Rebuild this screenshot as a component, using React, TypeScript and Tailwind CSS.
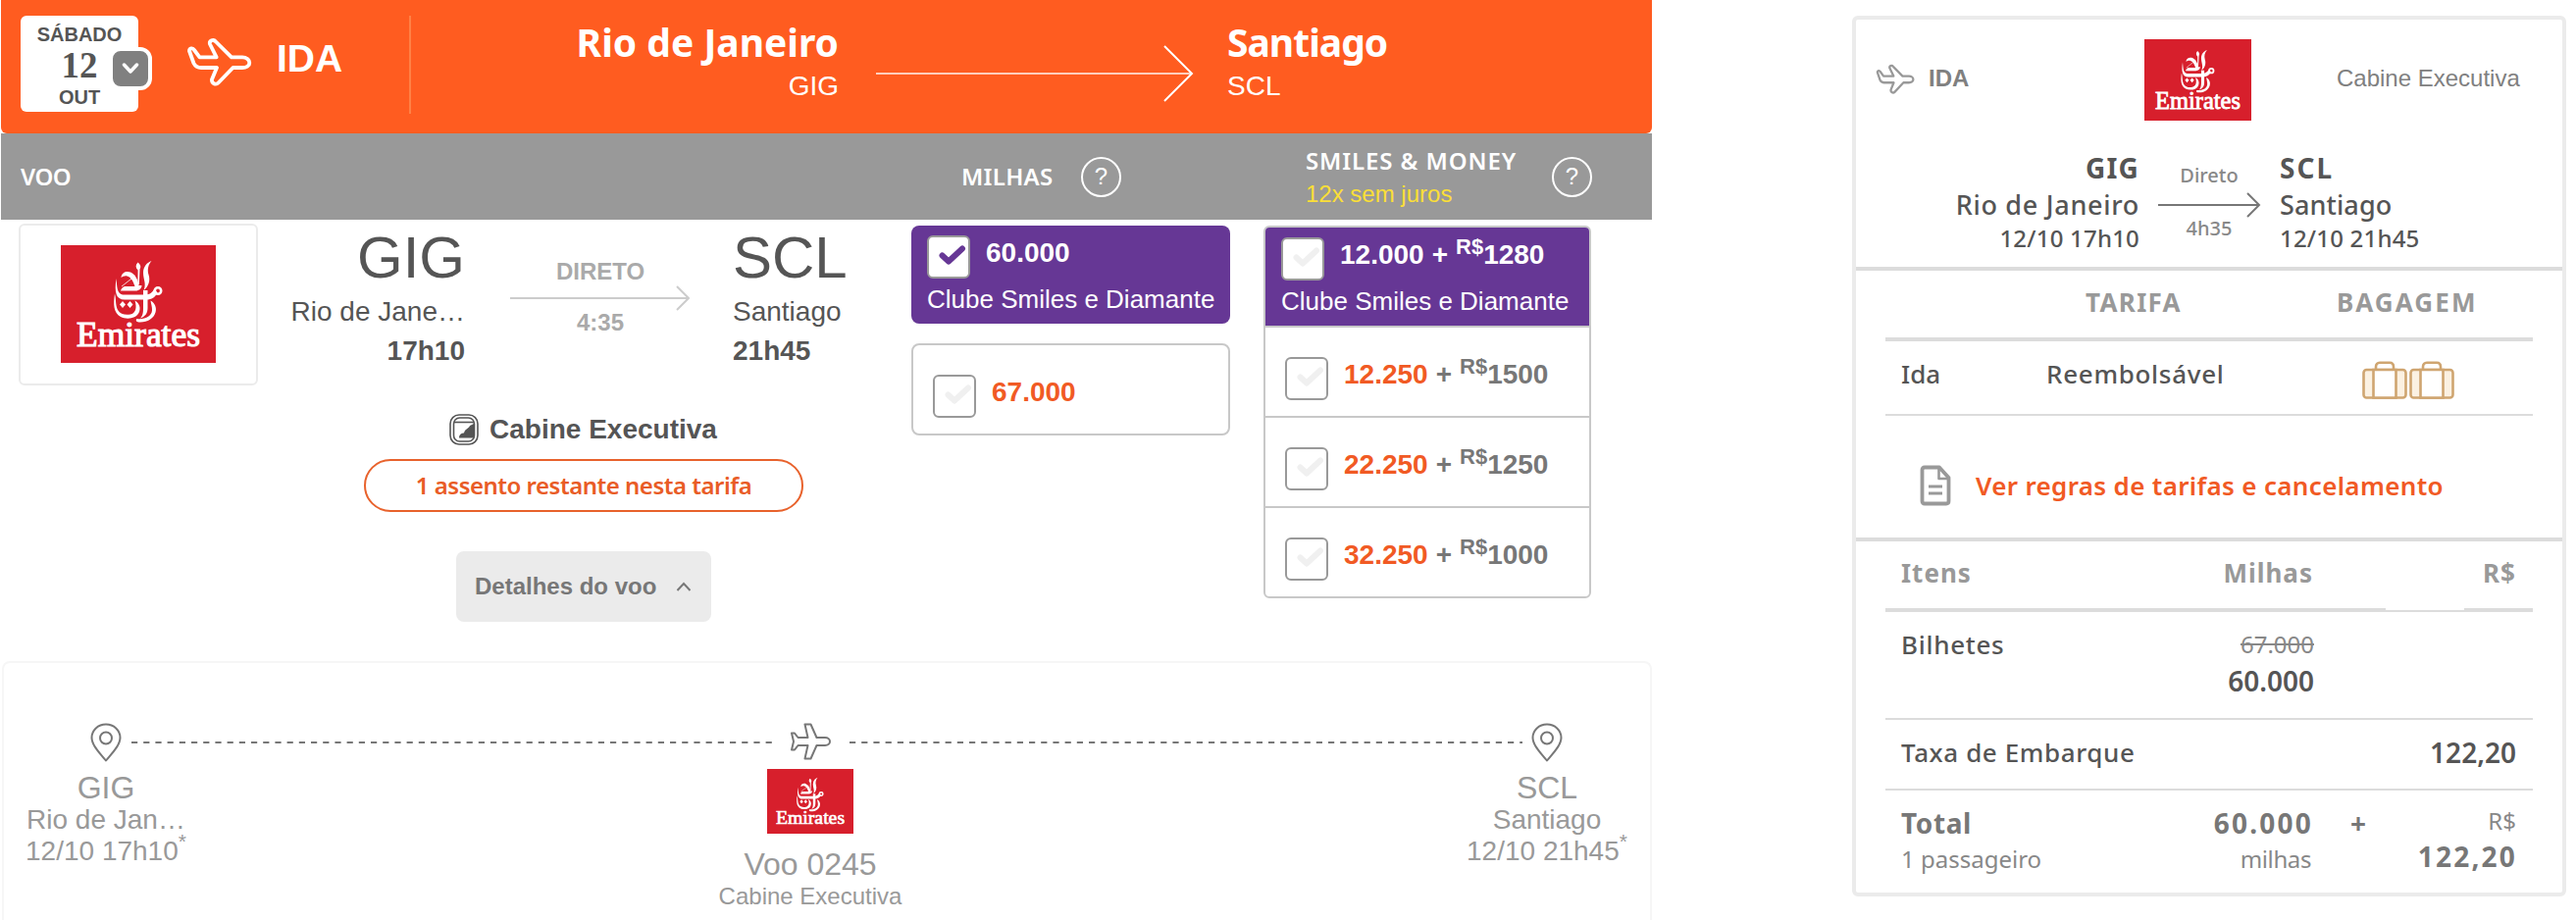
import { ReactNode } from 'react';

interface IconProps {
    className?: string;
}

function EmiratesLogo({ className }: IconProps) {
    return (
        <svg className={className} viewBox="0 0 158 120" preserveAspectRatio="none">
            <rect width="158" height="120" fill="#d71f2c" />
            <g fill="#fff">
                <path d="M92.500 16C88 17.500 84 22 84 28C84 35 87.500 39 84.500 46C89.500 42 91.500 36 89.500 30C88 25 89 20 92.500 16Z" />
                <path d="M61.500 33C62 27.500 67 26 71 27.500C76 29.500 79 36 79.500 41H82.500C82.500 44 80 46.500 76 46.500H61C61.500 44.500 63 42.500 65 42H75.500C74 37 71.500 32.500 67.500 31.500C65 31 63.500 32 61.500 33Z" />
                <path d="M78.500 17.500C81.500 20 82 22 80.500 24.500L79.800 40L78.400 40L78.600 25.500C76 23 76 20 78.500 17.500Z" />
                <path d="M56.500 34C57.500 43 57 49 63 50.500H86C91 50.500 93.500 47.500 95.500 44.500L98.500 48.500C96 53 93 55.500 87 55.500H65C56 55.500 54.500 48 56.500 34Z" />
                <path d="M84 46H88.500V64C88.500 69 86.500 72.500 81 74.500C84 71 84 68 84 63Z" />
                <path d="M55 49.500C56.500 55 55.500 61 58 66C60.500 70.500 66 71.500 71 70.500C76 69.500 78 64 75.500 56.500C80 59 82 64 79.500 69C76.500 75 67 76 61 73C53.500 69 53.500 60 55 49.500Z" />
                <path d="M91.500 56.500C96 59 98 64 96.500 68.500C94.500 75 88 79 79.500 78.500C77 78.300 76 76.500 77.500 75C86 76 92.500 72.500 93 66.500C93.200 63 92 60 91.500 56.500Z" />
                <path d="M63 57l3 3.500-3 3.500-3-3.500zM70.500 57l3 3.500-3 3.500-3-3.500z" />
            </g>
            <path d="M62 42L76 31" stroke="#fff" strokeWidth="0.800" />
            <circle cx="99" cy="46.500" r="3.200" fill="none" stroke="#fff" strokeWidth="2.600" />
            <text
                x="16"
                y="102.500"
                textLength="126"
                lengthAdjust="spacingAndGlyphs"
                fill="#fff"
                stroke="#fff"
                strokeWidth="1.200"
                className="font-['Liberation_Serif'] text-[36px]"
            >
                Emirates
            </text>
        </svg>
    );
}

function PlaneDeparture({ className }: IconProps) {
    return (
        <svg className={className} viewBox="0 0 67 50" preserveAspectRatio="none" fill="none" stroke="currentColor" strokeWidth="3.800" strokeLinejoin="round" strokeLinecap="round">
            <path d="M3 14C3 11 6.500 10.500 8 13L13.500 20.300H30.700L24 7C23 3.500 27.500 1.500 30 4.500L46 20.300H57C61 20.300 64.300 23 64.300 26C64.300 29 61 31 57 31H47.500L32.500 46.500C30 49 25.500 47 26 43L31 31H15C11 31 9 29.500 7.500 26.500Z" />
        </svg>
    );
}

function PlaneFlat({ className }: IconProps) {
    return (
        <svg className={className} viewBox="0 0 42 38" fill="none" stroke="#777" strokeWidth="2" strokeLinejoin="round">
            <path d="M15.500 1.500H21.500L27.500 15H36C39 15 41 17 41 19C41 21 39 23 36 23H27.500L21.500 36.500H15.500L18.500 23H8.500L5 27.500H2L4 19L2 10.500H5L8.500 15H18.500Z" />
        </svg>
    );
}

function Pin({ className }: IconProps) {
    return (
        <svg className={className} viewBox="0 0 32 40" fill="none" stroke="#777" strokeWidth="2" strokeLinejoin="round">
            <path d="M16 38.500C10 31 1.500 23 1.500 15C1.500 7.500 8 1.500 16 1.500S30.500 7.500 30.500 15C30.500 23 22 31 16 38.500Z" />
            <circle cx="16" cy="15.500" r="6" />
        </svg>
    );
}

function CabinWindow({ className }: IconProps) {
    return (
        <svg className={className} viewBox="0 0 30 32" fill="none" stroke="#555" strokeWidth="1.600">
            <rect x="1" y="1" width="28" height="30" rx="9" />
            <rect x="4.500" y="4" width="21" height="24" rx="6" />
            <path d="M5 8.500H25" />
            <path d="M10 24.500C10 20.500 13 19.500 15 19.500C16 15 20 15 21 12L25 10V23C25 24 24 24.500 23 24.500Z" fill="#555" stroke="none" />
        </svg>
    );
}

function Suitcase({ className }: IconProps) {
    return (
        <svg className={className} viewBox="0 0 46 39" fill="none" stroke="#cfa570" strokeWidth="2.600">
            <rect x="1.500" y="9" width="43" height="28.500" rx="3" fill="#fbf1e2" />
            <path d="M11.500 9H34.500V37.500H11.500Z" fill="#fff" />
            <path d="M14 9V6C14 3.500 15.500 1.800 18 1.800H28C30.500 1.800 32 3.500 32 6V9" />
        </svg>
    );
}

function RulesDoc({ className }: IconProps) {
    return (
        <svg className={className} viewBox="0 0 32 42" fill="none" stroke="#999" strokeWidth="3.800" strokeLinejoin="round">
            <path d="M2.500 5C2.500 3.500 3.500 2.500 5 2.500H20L29.500 13V37C29.500 38.500 28.500 39.500 27 39.500H5C3.500 39.500 2.500 38.500 2.500 37Z" />
            <path d="M19.500 3V14H29" strokeWidth="2.600" />
            <path d="M9 22H23M9 29H23" strokeWidth="3.200" />
        </svg>
    );
}

function Help() {
    return (
        <span className="flex h-[41px] w-[41px] items-center justify-center rounded-full border-2 border-white font-['Liberation_Sans'] text-2xl font-normal leading-none">
            ?
        </span>
    );
}

function Check({ color }: { color: string }) {
    return (
        <span className="block h-11 w-11 shrink-0 rounded-md border-2 border-[#999] bg-white">
            <svg className={`ml-2.5 mt-2 h-5 w-7 ${color}`} viewBox="0 0 28 20" fill="none" stroke="currentColor" strokeWidth="6" strokeLinecap="round" strokeLinejoin="round">
                <path d="M3.500 10.500L10 16.500L24 3.500" />
            </svg>
        </span>
    );
}

function Price({ miles, money, milesColor }: { miles: string; money: string; milesColor: string }) {
    return (
        <p className="flex text-[28px] font-bold leading-8">
            <span className={milesColor}>{miles}</span>
            <span className="mx-2">+</span>
            <span className="-mt-2 text-[22px]">R$</span>
            <span>{money}</span>
        </p>
    );
}

function Dashes({ className }: IconProps) {
    return (
        <svg className={className}>
            <line x1="0" y1="1" x2="100%" y2="1" stroke="#777" strokeWidth="2" strokeDasharray="6.200 6" />
        </svg>
    );
}

function Stop({ code, city, time }: { code: string; city: string; time: string }) {
    return (
        <div className="flex w-[180px] flex-col items-center text-[28px] leading-8 text-[#999]">
            <p className="mt-2 text-[32px] leading-9">{code}</p>
            <p className="-mt-px">{city}</p>
            <p className="flex">
                {time}
                <sup className="top-0 -mt-2.5 text-[21px] leading-8">*</sup>
            </p>
        </div>
    );
}

const options = [
    { miles: '12.250', money: '1500' },
    { miles: '22.250', money: '1250' },
    { miles: '32.250', money: '1000' },
];

function SearchHeader() {
    return (
        <div className="flex h-[136px] rounded-b-md bg-[#ff5c20] text-white">
            <div className="relative ml-5 mt-4 flex h-[98px] w-[120px] flex-col items-center rounded-md bg-white pt-[7px] text-[20px] font-bold leading-6 text-[#555]">
                <span>SÁBADO</span>
                <span className="mt-px font-['Liberation_Serif'] text-[37px] leading-[38px]">12</span>
                <span className="mt-px">OUT</span>
                <span className="absolute left-[90px] top-8 flex h-11 w-11 items-center justify-center rounded-xl border-4 border-white bg-[#808080]">
                    <svg className="h-3 w-[18px]" viewBox="0 0 18 12" fill="none" stroke="#fff" strokeWidth="3.500" strokeLinecap="round" strokeLinejoin="round">
                        <path d="M2.500 2L9 9L15.500 2" />
                    </svg>
                </span>
            </div>
            <PlaneDeparture className="ml-[49px] mt-[38px] h-[50px] w-[67px]" />
            <p className="ml-[25px] mt-[37px] w-[68px] text-[39px] font-bold leading-[46px]">IDA</p>
            <div className="ml-[67px] mt-4 h-[100px] w-0.5 bg-[#ff8146]" />
            <div className="mt-5 w-[436px] text-right">
                <p className="font-['Noto_Sans'] text-[39px] font-bold leading-[46px]">Rio de Janeiro</p>
                <p className="mt-[6px] text-[28px] leading-8">GIG</p>
            </div>
            <svg className="ml-[37px] mt-[45px] h-[60px] w-[326px]" viewBox="0 0 326 60" fill="none" stroke="#fff">
                <path d="M1 30H323" strokeWidth="2" strokeOpacity=".7" />
                <path d="M295 2L323 30L295 58" strokeWidth="2" />
            </svg>
            <div className="ml-[33px] mt-5">
                <p className="font-['Noto_Sans'] text-[39px] font-bold leading-[46px] tracking-[-1px]">Santiago</p>
                <p className="mt-[6px] text-[28px] leading-8">SCL</p>
            </div>
        </div>
    );
}

function ColumnBar() {
    return (
        <div className="flex h-[88px] items-center bg-[#999] font-['Noto_Sans'] text-2xl font-semibold text-white">
            <p className="w-[979px] pl-5 tracking-[-0.5px]">VOO</p>
            <p className="w-[122px] tracking-[0.3px]">MILHAS</p>
            <Help />
            <div className="ml-[188px] w-[251px] pt-0.5">
                <p className="leading-8 tracking-[0.9px]">SMILES &amp; MONEY</p>
                <p className="mt-0.5 font-['Liberation_Sans'] font-normal leading-8 text-[#fbdf37]">12x sem juros</p>
            </div>
            <Help />
        </div>
    );
}

function FlightInfo() {
    return (
        <div className="w-[928px]">
            <div className="flex h-[169px] pt-1">
                <div className="ml-[18px] flex h-[165px] w-[244px] justify-center rounded-md border-2 border-[#ebebeb] pt-5">
                    <EmiratesLogo className="h-[120px] w-[158px]" />
                </div>
                <div className="w-[211px] text-right text-[28px] leading-10 text-[#555]">
                    <p className="text-[60px] leading-[70px]">GIG</p>
                    <p>Rio de Jane…</p>
                    <p className="font-bold">17h10</p>
                </div>
                <div className="ml-[46px] mt-[35px] flex w-[184px] flex-col items-center text-2xl font-bold leading-7 text-[#aaa]">
                    <p>DIRETO</p>
                    <svg className="h-[26px] w-[184px]" viewBox="0 0 184 26" fill="none" stroke="#ccc" strokeWidth="2">
                        <path d="M0 13H182M170 1L182 13L170 25" />
                    </svg>
                    <p className="-mt-0.5">4:35</p>
                </div>
                <div className="ml-[43px] text-[28px] leading-10 text-[#555]">
                    <p className="text-[60px] leading-[70px]">SCL</p>
                    <p>Santiago</p>
                    <p className="font-bold">21h45</p>
                </div>
            </div>
            <div className="ml-[457px] mt-[29px] flex text-[28px] font-bold leading-8 text-[#555]">
                <CabinWindow className="h-8 w-[30px]" />
                <p className="ml-[11px]">Cabine Executiva</p>
            </div>
            <div className="ml-[370px] mt-[14px] flex h-[54px] w-[448px] items-center justify-center rounded-full border-2 border-[#e8622c] font-['Noto_Sans'] text-2xl font-semibold tracking-[-0.5px] text-[#e95c26]">
                1 assento restante nesta tarifa
            </div>
            <div className="ml-[464px] mt-10 flex h-[72px] w-[260px] items-center rounded-lg bg-[#ebebeb] pl-[19px] text-2xl font-bold text-[#777]">
                Detalhes do voo
                <svg className="ml-5 h-2.5 w-4" viewBox="0 0 16 10" fill="none" stroke="#777" strokeWidth="2">
                    <path d="M1.500 9L8 2L14.500 9" />
                </svg>
            </div>
        </div>
    );
}

function MilesColumn() {
    return (
        <div className="mt-1.5 w-[325px]">
            <div className="h-[100px] rounded-lg bg-[#663795] pl-4 pt-2.5 text-white">
                <div className="flex">
                    <Check color="text-[#663795]" />
                    <p className="ml-4 mt-0.5 text-[28px] font-bold leading-8">60.000</p>
                </div>
                <p className="mt-[5px] text-[26px] leading-8">Clube Smiles e Diamante</p>
            </div>
            <div className="mt-5 flex h-[94px] rounded-lg border-2 border-[#c8c8c8] pl-5 pt-[30px]">
                <Check color="text-[#f0f0f0]" />
                <p className="ml-4 mt-0.5 text-[28px] font-bold leading-8 text-[#f15a24]">67.000</p>
            </div>
        </div>
    );
}

function MoneyColumn() {
    return (
        <div className="ml-[34px] mt-1.5 h-[380px] w-[334px] overflow-hidden rounded-md border-2 border-[#c8c8c8] text-[#777]">
            <div className="h-[100px] bg-[#663795] pl-4 pt-2.5 text-white">
                <div className="flex">
                    <Check color="text-[#f0f0f0]" />
                    <div className="ml-4 mt-0.5">
                        <Price miles="12.000" money="1280" milesColor="text-white" />
                    </div>
                </div>
                <p className="mt-[5px] text-[26px] leading-8">Clube Smiles e Diamante</p>
            </div>
            {options.map((o) => (
                <div key={o.miles} className="flex h-[92px] border-t-2 border-[#c8c8c8] pl-5 pt-[30px]">
                    <Check color="text-[#f0f0f0]" />
                    <div className="ml-4 mt-0.5">
                        <Price miles={o.miles} money={o.money} milesColor="text-[#f15a24]" />
                    </div>
                </div>
            ))}
        </div>
    );
}

function Timeline() {
    return (
        <div className="ml-px mt-[39px] h-[265px] rounded-t-lg border-2 border-b-0 border-[#f6f6f6] pt-[61px]">
            <div className="flex">
                <Pin className="ml-[88px] h-10 w-8" />
                <Dashes className="ml-[10px] mt-[19px] h-0.5 w-[656px]" />
                <PlaneFlat className="ml-[15px] h-[38px] w-[42px]" />
                <Dashes className="ml-[19px] mt-[19px] h-0.5 w-[686px]" />
                <Pin className="ml-[9px] h-10 w-8" />
            </div>
            <div className="flex">
                <div className="ml-[14px]">
                    <Stop code="GIG" city="Rio de Jan…" time="12/10 17h10" />
                </div>
                <div className="ml-[518px] flex w-[220px] flex-col items-center pt-[7px] text-[#999]">
                    <EmiratesLogo className="h-[66px] w-[88px]" />
                    <p className="mt-[13px] text-[32px] leading-9">Voo 0245</p>
                    <p className="-mt-px text-2xl leading-8">Cabine Executiva</p>
                </div>
                <div className="ml-[551px]">
                    <Stop code="SCL" city="Santiago" time="12/10 21h45" />
                </div>
            </div>
        </div>
    );
}

function Row({ className, children }: { className: string; children: ReactNode }) {
    return <div className={`mx-[30px] flex border-[#dcdcdc] pl-4 pr-[17px] ${className}`}>{children}</div>;
}

function Summary() {
    return (
        <div className="ml-[204px] mt-4 h-[898px] w-[728px] rounded-md border-4 border-[#ebebeb] font-['Noto_Sans'] text-[26px] font-medium leading-8 text-[#555]">
            <div className="h-[256px] border-b-4 border-[#dcdcdc]">
                <div className="flex pt-5 font-['Liberation_Sans'] text-2xl text-[#808080]">
                    <PlaneDeparture className="ml-5 mt-[25px] h-[31px] w-10 text-[#999]" />
                    <p className="ml-[14px] mt-6 w-[220px] font-bold">IDA</p>
                    <EmiratesLogo className="h-[83px] w-[109px]" />
                    <p className="ml-[87px] mt-6 font-normal">Cabine Executiva</p>
                </div>
                <div className="mt-[30px] flex">
                    <div className="w-[289px] text-right">
                        <p className="text-[28px] font-bold leading-9 tracking-[1.2px]">GIG</p>
                        <p className="mt-0.5 text-[27px] leading-9 tracking-[0.7px]">Rio de Janeiro</p>
                        <p className="text-2xl leading-8 tracking-[0.2px]">12/10 17h10</p>
                    </div>
                    <div className="ml-[18px] mt-3 flex w-[106px] flex-col items-center text-[20px] leading-7 text-[#888]">
                        <p>Direto</p>
                        <svg className="mt-[3px] h-[26px] w-[106px]" viewBox="0 0 106 26" fill="none" stroke="#777" strokeWidth="2">
                            <path d="M1 13H104M92 1L104 13L92 25" />
                        </svg>
                        <p className="-mt-[3px]">4h35</p>
                    </div>
                    <div className="ml-[19px]">
                        <p className="text-[28px] font-bold leading-9 tracking-[2px]">SCL</p>
                        <p className="mt-0.5 text-[27px] leading-9 tracking-[0.1px]">Santiago</p>
                        <p className="text-2xl leading-8 tracking-[0.2px]">12/10 21h45</p>
                    </div>
                </div>
            </div>
            <div className="h-[276px] border-b-4 border-[#dcdcdc]">
                <Row className="h-[72px] border-b-4 pt-4 font-bold text-[#999]">
                    <p className="ml-[188px] tracking-[1.300px]">TARIFA</p>
                    <p className="ml-[158px] tracking-[2.100px]">BAGAGEM</p>
                </Row>
                <Row className="h-[76px] border-b-2 pt-[17px]">
                    <p className="w-[148px]">Ida</p>
                    <p className="w-[322px] tracking-[0.7px]">Reembolsável</p>
                    <Suitcase className="mt-[3px] h-[39px] w-[46px]" />
                    <Suitcase className="ml-0.5 mt-[3px] h-[39px] w-[46px]" />
                </Row>
                <div className="flex pl-[65px] pt-[50px] font-semibold text-[#f15a24]">
                    <RulesDoc className="h-[42px] w-8" />
                    <p className="ml-[25px] mt-[5px] tracking-[0.33px]">Ver regras de tarifas e cancelamento</p>
                </div>
            </div>
            <Row className="h-[72px] border-b-4 pt-4 font-bold tracking-[1px] text-[#999]">
                <p className="w-[420px]">
                    Itens<span className="float-right">Milhas</span>
                </p>
                <p className="ml-auto">R$</p>
            </Row>
            <div className="-mt-1 ml-[540px] h-0.5 w-20 bg-white" />
            <Row className="mt-0.5 h-[110px] justify-between border-b-2 pt-[17px]">
                <p className="tracking-[0.7px]">Bilhetes</p>
                <div className="mr-[206px] text-right">
                    <p className="text-2xl font-normal text-[#888] line-through">67.000</p>
                    <p className="mt-[5px] text-[28px] font-semibold">60.000</p>
                </div>
            </Row>
            <Row className="h-[72px] justify-between border-b-2 pt-[17px]">
                <p className="tracking-[0.6px]">Taxa de Embarque</p>
                <p className="text-[28px] font-semibold">122,20</p>
            </Row>
            <Row className="pt-[17px] text-[28px] font-bold text-[#777]">
                <div className="w-[200px]">
                    <p className="tracking-[0.6px]">Total</p>
                    <p className="mt-[5px] text-2xl font-normal text-[#888]">1 passageiro</p>
                </div>
                <div className="w-[220px] text-right">
                    <p className="tracking-[2.200px]">60.000</p>
                    <p className="mr-0.5 mt-[5px] text-2xl font-normal tracking-[-0.4px] text-[#888]">milhas</p>
                </div>
                <p className="ml-[38px]">+</p>
                <div className="ml-auto text-right">
                    <p className="-mt-0.5 text-2xl font-normal text-[#888]">R$</p>
                    <p className="-mr-px mt-1 tracking-[2.200px]">122,20</p>
                </div>
            </Row>
        </div>
    );
}

export default function App() {
    return (
        <div className="flex h-[938px] w-[2626px] overflow-hidden bg-white font-['Liberation_Sans',sans-serif]">
            <div className="ml-px w-[1683px]">
                <SearchHeader />
                <ColumnBar />
                <div className="flex h-[411px]">
                    <FlightInfo />
                    <MilesColumn />
                    <MoneyColumn />
                </div>
                <Timeline />
            </div>
            <Summary />
        </div>
    );
}
